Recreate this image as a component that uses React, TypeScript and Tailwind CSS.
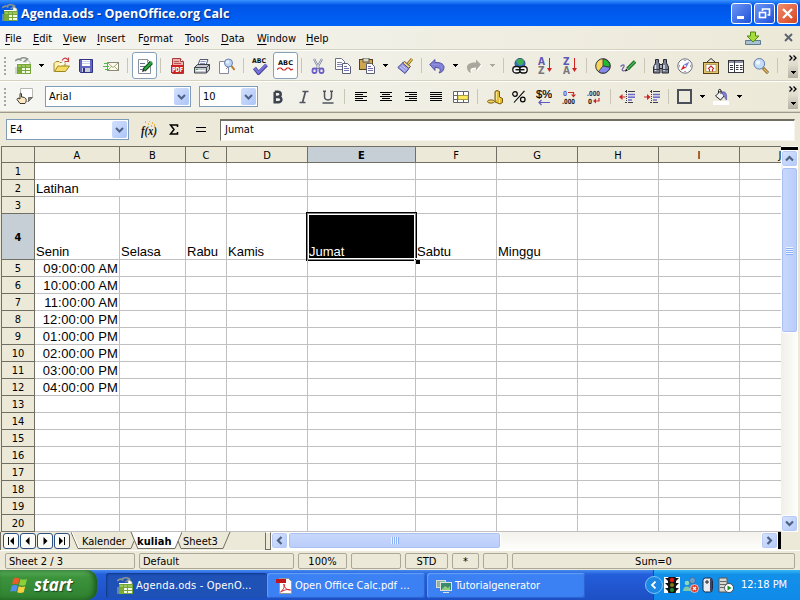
import React from "react";

type Kids = { children?: React.ReactNode; className?: string };

const UI = "font-['DejaVu_Sans_Condensed','DejaVu_Sans',sans-serif] [font-stretch:condensed]";

function Ic({ children, className = "", w = 16, h = 16 }: Kids & { w?: number; h?: number }) {
  return (
    <svg width={w} height={h} viewBox={`0 0 ${w} ${h}`} fill="none" className={`block shrink-0 ${className}`}>
      {children}
    </svg>
  );
}

function IcText({ x, y, size, fill, children, len }: { x: number; y: number; size: number; fill: string; children: string; len?: number }) {
  return (
    <text x={x} y={y} fontSize={size} fill={fill} fontWeight="700" fontFamily="DejaVu Sans" textLength={len} lengthAdjust="spacingAndGlyphs">
      {children}
    </text>
  );
}

const Sep = ({ className = "" }: Kids) => <div className={`h-[15px] w-px shrink-0 bg-[#c9c6b8] ${className}`} />;

const Grip = () => (
  <div className="ml-1 flex shrink-0 flex-col gap-[2px]">
    {[0, 1, 2, 3, 4].map((i) => (
      <div key={i} className="size-[2px] bg-[#aaa79a]" />
    ))}
  </div>
);

const Arrow = ({ className = "", color = "#000" }: Kids & { color?: string }) => (
  <Ic w={5} h={3} className={className}>
    <path d="M0 0h5v1H0zM1 1h3v1H1zM2 2h1v1H2z" fill={color} />
  </Ic>
);

function CalcIcon({ className = "" }: Kids) {
  return (
    <Ic w={17} h={18} className={className}>
      <path d="M11 2l4 3v3h-4z" fill="#f7fbf0" stroke="#93a58e" strokeWidth=".7" />
      <path d="M2 6h9l2-1v3H2z" fill="#fff" />
      <path d="M0 4c2.500-2.500 4.500-2.500 6.500-.5M5 2c3-2 5-1.500 7.500 0l-4 3" stroke="#8a958f" strokeWidth="1.500" />
      <rect x="2.500" y="7.500" width="13" height="9" fill="#f3fae3" stroke="#76a53c" />
      <rect x="3" y="8" width="3" height="9" fill="#7cae33" />
      <rect x="3" y="8" width="12" height="2" fill="#9cc75a" />
      <path d="M3 10.500h12M3 13.500h12M6.500 8v9M10.500 8v9" stroke="#76a53c" />
      <path d="M1 10v7" stroke="#a9b5a2" />
    </Ic>
  );
}

const OpenIcon = ({ className = "" }: Kids) => (
  <Ic w={17} h={17} className={className}>
    <path d="M1 14.500V6.500l2-2h3l1 1h5V9" fill="#fff2a8" stroke="#a08a2c" />
    <path d="M1.500 14.500L5 9h11.500L12.500 14.500z" fill="#f5dd63" stroke="#9d8526" />
    <path d="M5 7.500l6-3 1 2-5 2z" fill="#fff" />
    <path d="M9 3.500c2-3 4-3 6-.5M15.500 .5v4h-4" stroke="#cf4040" strokeWidth="1.200" />
  </Ic>
);

const SaveIcon = ({ className = "" }: Kids) => (
  <Ic className={className}>
    <path d="M1.500 1.500h13v13h-12l-1-1z" fill="#6166c4" stroke="#2e3280" />
    <rect x="4" y="2" width="8" height="6" fill="#fff" />
    <path d="M4 3.500h8M4 5.500h8" stroke="#c8cde8" />
    <rect x="4" y="10" width="8" height="4" fill="#c9cdd8" />
    <rect x="5" y="10" width="2" height="4" fill="#2e3280" />
  </Ic>
);

const MailIcon = ({ className = "" }: Kids) => (
  <Ic className={className}>
    <rect x="4.500" y="4.500" width="11" height="8" fill="#fffde8" stroke="#8b8b78" />
    <path d="M5 5l5 4.500L15 5M5 12l4-4M15 12l-4-4" stroke="#a5a58e" />
    <path d="M1 5.500h4M0 8.500h6M2 11.500h4" stroke="#45c245" strokeWidth="1.200" />
  </Ic>
);

const EditIcon = () => (
  <Ic>
    <path d="M1.500 1.500h9l3 3v11h-12z" fill="#fff" stroke="#8a8f9c" />
    <path d="M10.500 1.500v3h3" stroke="#8a8f9c" />
    <path d="M3 5.500h5M3 8.500h7M3 11.500h4" stroke="#6d7098" />
    <path d="M7 12L14.500 4.500" stroke="#0b4f16" strokeWidth="4" />
    <path d="M7.500 11.500L15 4" stroke="#2ba53c" strokeWidth="2.200" />
    <path d="M5 14l1-3 2 2z" fill="#222" />
  </Ic>
);

const PdfIcon = ({ className = "" }: Kids) => (
  <Ic className={className}>
    <path d="M2.500.5h8l3 3v12h-11z" fill="#e8b0b0" stroke="#a63a3a" />
    <path d="M10.500.5v3h3" fill="#fff" stroke="#a63a3a" />
    <path d="M4 3.500h5M4 5.500h7" stroke="#b55" />
    <rect x="1" y="7" width="13" height="8" fill="#d21e1e" />
    <IcText x={2} y={14} size={7} fill="#fff" len={11}>PDF</IcText>
  </Ic>
);

const PrintIcon = ({ className = "" }: Kids) => (
  <Ic className={className}>
    <path d="M4 7l2-5.500h8L12 7z" fill="#f6f6ff" stroke="#565b70" />
    <path d="M6.500 3.500h5M6 5.500h5" stroke="#8c90b8" />
    <path d="M.5 9.500l3-3h12v5l-3 3.500H.5z" fill="#c5c8cf" stroke="#3e424c" />
    <path d="M.5 9.500h12l3-3M12.500 9.500V15" stroke="#3e424c" />
    <path d="M2 12.500h9" stroke="#fff" />
    <rect x="2" y="11" width="2" height="1" fill="#3ca53c" />
  </Ic>
);

const PreviewIcon = ({ className = "" }: Kids) => (
  <Ic className={className}>
    <path d="M.5 3.500h9v12h-9z" fill="#fff" stroke="#85899a" />
    <path d="M7 11l2.500-2.500" stroke="#85899a" />
    <circle cx="9.500" cy="5" r="4" fill="#bcd7f5" stroke="#6f7fae" />
    <circle cx="8.500" cy="4" r="1.500" fill="#eef7ff" />
    <path d="M12.500 8l3 4" stroke="#b77832" strokeWidth="2" />
  </Ic>
);

const SpellIcon = ({ className = "" }: Kids) => (
  <Ic w={17} h={18} className={className}>
    <IcText x={1} y={6} size={6.5} fill="#111" len={14}>ABC</IcText>
    <path d="M3.500 11l4 5L15.500 8" stroke="#3e3b95" strokeWidth="3.800" />
    <path d="M3.500 11l4 4.500L15.500 7.500" stroke="#7674d8" strokeWidth="2.400" />
  </Ic>
);

const AutoSpellIcon = () => (
  <Ic w={17} h={14}>
    <IcText x={1} y={6} size={6.5} fill="#111" len={15}>ABC</IcText>
    <path d="M0 10.500l2-1.500h2l2 2h2l2-2h2l2 2 2-1" stroke="#d02626" strokeWidth="1.200" />
  </Ic>
);

const CutIcon = ({ className = "" }: Kids) => (
  <Ic className={className}>
    <path d="M4 1l5.500 10M12 1L6.500 11" stroke="#777d95" strokeWidth="2.200" />
    <path d="M4 1l5 9M12 1L7 10" stroke="#e4e8f3" strokeWidth=".9" />
    <rect x="2.500" y="10.500" width="4" height="4.500" rx="1.500" stroke="#6a5fc9" strokeWidth="1.800" />
    <rect x="9.500" y="10.500" width="4" height="4.500" rx="1.500" stroke="#6a5fc9" strokeWidth="1.800" />
  </Ic>
);

const CopyIcon = ({ className = "" }: Kids) => (
  <Ic className={className}>
    <path d="M.5.500h6l3 3v8h-9z" fill="#fff" stroke="#6d7080" />
    <path d="M2 4.500h5M2 6.500h5M2 8.500h5" stroke="#8583b8" />
    <path d="M7.500 5.500h5l3 3v7h-8z" fill="#fff" stroke="#5b5f74" />
    <path d="M9 8.500h3M9 10.500h5M9 12.500h5" stroke="#7370b5" />
  </Ic>
);

const PasteIcon = ({ className = "" }: Kids) => (
  <Ic className={className}>
    <rect x=".5" y="1.500" width="13" height="10" fill="#cda64f" stroke="#54421a" />
    <rect x="4" y="0" width="6" height="4" fill="#d8d6c4" stroke="#444" strokeWidth=".8" />
    <path d="M7.500 5.500h5l3 3v7h-8z" fill="#fff" stroke="#5b5f74" />
    <path d="M9 8.500h3M9 10.500h5M9 12.500h5" stroke="#7370b5" />
  </Ic>
);

const BrushIcon = ({ className = "" }: Kids) => (
  <Ic className={className}>
    <path d="M10 7l5-6" stroke="#8a6b18" strokeWidth="2.800" />
    <path d="M10 7l5-6" stroke="#e9c860" strokeWidth="1.200" />
    <path d="M7.500 3.500l6 5-2 2-6.500-5z" fill="#f4d66d" stroke="#4d4a6f" />
    <path d="M5.500 5l6.500 5.500L8 15.500 .8 9.500z" fill="#9a9ae4" stroke="#4b4d90" />
    <path d="M3 9l5 4M5 7.500l5 4" stroke="#c9c9fa" />
  </Ic>
);

const UndoIcon = ({ className = "" }: Kids) => (
  <Ic className={className}>
    <path d="M.7 6.500L6 1.500v3c6-.5 9.500 2 9 5.500-.4 3-2.500 4.500-5 5 2-2.500 2-5.500-4-5.500v3z" fill="#7f7fd4" stroke="#4c4c9d" strokeWidth=".9" />
    <path d="M2.500 6.500h6c3 .2 4.500 1.500 4.500 4" stroke="#8f8fe0" />
  </Ic>
);

const RedoIcon = ({ className = "" }: Kids) => (
  <Ic className={className}>
    <path d="M16 7.500L11 2.500v3C5 5 1.500 7.500 2 11c.4 3 2 4.500 4.500 5-2-2.500-1.500-5.500 4.500-5.500v3z" fill="#fff" />
    <path d="M15 6.500L10 1.500v3C4 4 .5 6.500 1 10c.4 3 2 4.500 4.500 5-2-2.500-1.500-5.500 4.500-5.500v3z" fill="#aaa79c" />
  </Ic>
);

const LinkIcon = ({ className = "" }: Kids) => (
  <Ic className={className}>
    <circle cx="8" cy="5.500" r="5" fill="#3579b8" stroke="#2c4a78" />
    <path d="M4 3c2-3 6-3 8 0l-2 4H7z" fill="#3fae56" />
    <rect x=".8" y="8.500" width="7.500" height="6.500" rx="3" fill="#fff" stroke="#111" strokeWidth="1.300" />
    <rect x="7.700" y="8.500" width="7.500" height="6.500" rx="3" fill="#fff" stroke="#111" strokeWidth="1.300" />
    <path d="M3.500 11.700h9" stroke="#111" strokeWidth="1.500" />
  </Ic>
);

const SortIcon = ({ a, b, className = "" }: Kids & { a: string; b: string }) => (
  <div className={`flex w-4 shrink-0 items-center justify-between pr-[2px] ${className}`}>
    <div className="flex w-[7px] flex-col text-[10px] leading-[9px] font-bold">
      <span className="text-[#5b58b8]">{a}</span>
      <span className="text-[#77777a]">{b}</span>
    </div>
    <Ic w={5} h={15}>
      <path d="M2.500 0v12" stroke="#cf2222" />
      <path d="M0 10h5l-2.500 4z" fill="#cf2222" />
    </Ic>
  </div>
);

const PieIcon = ({ className = "" }: Kids) => (
  <Ic className={className}>
    <circle cx="8" cy="8" r="7.300" fill="#f6d55a" stroke="#2d3345" />
    <path d="M8 8V1a7 7 0 0 1 6.800 8z" fill="#23bb32" stroke="#2d3345" strokeWidth=".8" />
    <path d="M8 8l6.800 1.500A7 7 0 0 1 3.500 13.500z" fill="#8589e8" stroke="#2d3345" strokeWidth=".8" />
  </Ic>
);

const DrawIcon = ({ className = "" }: Kids) => (
  <Ic className={className}>
    <path d="M7.500 11L15 3.500" stroke="#0d4f17" strokeWidth="3.600" />
    <path d="M7.500 11L15 3.500" stroke="#3cae4c" strokeWidth="1.900" />
    <path d="M.5 8.500c3-3 5-1.500 2.500 1.500-2 2.500-.5 3.500 2.500 2.500" stroke="#6d62a8" strokeWidth="1.200" />
    <path d="M5 13.500l1-3 2 2z" fill="#111" />
  </Ic>
);

const BinocularsIcon = ({ className = "" }: Kids) => (
  <Ic className={className}>
    <path d="M2.500 1.500h3v3l1.500 2v8.500H.5V9L2.500 5zM10.500 1.500h3v3.500l2 4v6H9V6.500l1.500-2z" fill="#7b8291" stroke="#252a35" />
    <path d="M2.500 7v6M11 7v6" stroke="#dfe4ec" strokeWidth="1.500" />
    <rect x="6.500" y="6.500" width="3" height="4" fill="#a6adb9" stroke="#252a35" />
    <path d="M1 11.500h6M9 11.500h6" stroke="#3a3f4b" />
  </Ic>
);

const CompassIcon = ({ className = "" }: Kids) => (
  <Ic className={className}>
    <circle cx="8" cy="8" r="7.200" fill="#fbfbfd" stroke="#6d717d" />
    <path d="M8 2v1M8 13v1M2 8h1M13 8h1" stroke="#555" />
    <path d="M12.500 3.500L9.500 9.300 6.700 6.700z" fill="#7a80dc" />
    <path d="M3.500 12.500L6.700 6.700l2.800 2.600z" fill="#d82323" />
    <circle cx="8" cy="8" r="1" fill="#fff" />
  </Ic>
);

const GalleryIcon = ({ className = "" }: Kids) => (
  <Ic className={className}>
    <path d="M4 4l4-3.500L12 4" stroke="#333" />
    <rect x=".5" y="4.500" width="15" height="11" fill="#e6c568" stroke="#574318" />
    <rect x="3" y="6.500" width="10" height="7" fill="#fff" stroke="#80672c" strokeWidth=".5" />
    <path d="M5 11l3-3 3 3M6.500 11v2.500M9.500 11v2.500" stroke="#c52727" strokeWidth="1.100" />
  </Ic>
);

const SourcesIcon = ({ className = "" }: Kids) => (
  <Ic className={className}>
    <rect x=".5" y="2.500" width="15" height="12" fill="#fff" stroke="#34373f" />
    <rect x="1" y="3" width="14" height="2" fill="#8b8fa2" />
    <path d="M6.500 3v11" stroke="#34373f" />
    <path d="M2 7.500h3M2 9.500h3M2 11.500h3M8 7.500h2.500M8 9.500h2.500M8 11.500h2.500M12 7.500h2.500M12 9.500h2.500M12 11.500h2.500" stroke="#33353c" />
  </Ic>
);

const ZoomIcon = ({ className = "" }: Kids) => (
  <Ic className={className}>
    <path d="M10 10l5 5" stroke="#6a4d1b" strokeWidth="3" />
    <path d="M10.500 10.500l4.300 4.300" stroke="#edb95c" strokeWidth="1.600" />
    <circle cx="6.300" cy="5.800" r="5.300" fill="#c3dcf8" stroke="#6579a8" />
    <circle cx="5" cy="4.500" r="2.200" fill="#eef7ff" />
  </Ic>
);

const MoreTools = ({ className = "" }: Kids) => (
  <div className={`flex h-[27px] w-[10px] shrink-0 flex-col items-center justify-between self-start bg-linear-to-b from-[#efede0] via-[#e0ddcf] to-[#b4b1a4] pt-1 pb-1 ${className}`}>
    <Ic w={8} h={6}>
      <path d="M.5 .5L3 3 .5 5.500M4.500 .5L7 3 4.500 5.500" stroke="#000" strokeWidth="1.300" />
    </Ic>
    <Arrow />
  </div>
);

const DropButton = ({ className = "" }: Kids) => (
  <div className={`flex w-[15px] items-center justify-center self-stretch rounded-[2px] bg-linear-to-br from-[#d3e0fd] to-[#adc5f7] ${className}`}>
    <Ic w={9} h={6}>
      <path d="M1 1l3.500 3.500L8 1" stroke="#4d6185" strokeWidth="2" />
    </Ic>
  </div>
);

const Combo = ({ className = "", children }: Kids) => (
  <div className={`flex h-[21px] shrink-0 items-center justify-between border border-[#7f9db9] bg-white p-px pl-[3px] ${className}`}>
    <span className="pt-px">{children}</span>
    <DropButton />
  </div>
);

const Lines = ({ rows, className = "" }: Kids & { rows: [number, number][] }) => (
  <Ic w={12} h={11} className={className}>
    {rows.map(([x, w], i) => (
      <rect key={i} x={x} y={i * 2 + 1} width={w} height={1} fill="#000" />
    ))}
  </Ic>
);

const Indent = ({ right, className = "" }: Kids & { right?: boolean }) => (
  <Ic className={className}>
    <path d="M6 2.500h2M9 2.500h7M6 13.500h2M9 13.500h5" stroke="#3b3d44" />
    <path d="M9 5.500h7M9 11h4" stroke="#6e6ad0" strokeWidth="1.600" />
    <path d="M9 8.200h7" stroke="#6e6ad0" strokeWidth="1.600" />
    <path d="M7.500 1v14" stroke="#3b3d44" strokeDasharray="1 1" />
    {right ? <path d="M0 7.500h3V5l3.500 3L3 11V8.500H0z" fill="#cc2525" /> : <path d="M6.500 7.500h-3V5L0 8l3.500 3V8.500h3z" fill="#cc2525" />}
  </Ic>
);

function StandardToolbar() {
  return (
    <div className="flex h-[31px] items-center border-t border-[#fffffb] border-b border-b-[#d5d1c0] bg-linear-to-r from-[#f5f5f2] to-[#ece9d8]">
      <Grip />
      <CalcIcon className="ml-[9px]" />
      <Arrow className="ml-[7px]" />
      <OpenIcon className="ml-[9px]" />
      <SaveIcon className="ml-[8px]" />
      <MailIcon className="ml-[9px]" />
      <Sep className="ml-[8px]" />
      <div className="ml-[4px] flex h-[27px] w-[25px] shrink-0 items-center justify-center rounded-[3px] border border-[#85a0b8] bg-white"><EditIcon /></div>
      <Sep className="ml-[3px]" />
      <PdfIcon className="ml-[9px]" />
      <PrintIcon className="ml-[8px]" />
      <PreviewIcon className="ml-[9px]" />
      <Sep className="ml-[8px]" />
      <SpellIcon className="ml-[7px]" />
      <div className="ml-[5px] flex h-[27px] w-[25px] shrink-0 items-center justify-center rounded-[3px] border border-[#85a0b8] bg-white"><AutoSpellIcon /></div>
      <Sep className="ml-[3px]" />
      <CutIcon className="ml-[8px]" />
      <CopyIcon className="ml-[9px]" />
      <PasteIcon className="ml-[8px]" />
      <Arrow className="ml-[8px]" />
      <BrushIcon className="ml-[9px]" />
      <Sep className="ml-[8px]" />
      <UndoIcon className="ml-[7px]" />
      <Arrow className="ml-[8px]" />
      <RedoIcon className="ml-[8px]" />
      <Arrow className="ml-[8px]" color="#aaa79c" />
      <Sep className="ml-[8px]" />
      <LinkIcon className="ml-[8px]" />
      <SortIcon className="ml-[10px]" a="A" b="Z" />
      <SortIcon className="ml-[9px]" a="Z" b="A" />
      <Sep className="ml-[7px]" />
      <PieIcon className="ml-[8px]" />
      <DrawIcon className="ml-[9px]" />
      <Sep className="ml-[8px]" />
      <BinocularsIcon className="ml-[8px]" />
      <CompassIcon className="ml-[8px]" />
      <GalleryIcon className="ml-[10px]" />
      <SourcesIcon className="ml-[9px]" />
      <ZoomIcon className="ml-[9px]" />
      <Sep className="ml-[8px]" />
      <MoreTools className="ml-[10px]" />
    </div>
  );
}

function FormatToolbar() {
  return (
    <div className="flex h-[31px] items-center border-t border-[#fffffb] border-b border-b-[#d5d1c0] bg-linear-to-r from-[#f5f5f2] to-[#ece9d8]">
      <Grip />
      <Ic w={17} h={17} className="ml-[10px]">
        <path d="M4.500.5h12v9l-4 4h-8z" fill="#fff" stroke="#b9b9b3" />
        <path d="M12.500 13.500v-4h4z" fill="#8e8e88" stroke="#6b6b66" />
        <path d="M4 15.500L1 11.500l1-1.500 2 1V6c0-1 1.500-1 1.500 0v3c2 0 4 .7 4.500 2 .5 2 0 3-1 4.500z" fill="#ffe9c0" stroke="#222" strokeWidth=".9" />
      </Ic>
      <Combo className="ml-[12px] w-[146px]">Arial</Combo>
      <Combo className="ml-[8px] w-[59px]">10</Combo>
      <Ic w={10} h={14} className="ml-[15px]"><path d="M1.700 2v10.200h3.500c4.500 0 4-5.300 0-5.300H2M1.700 1.800h3c4 0 4 5 0 5" stroke="#3d434f" strokeWidth="2.500" /></Ic>
      <Ic w={10} h={14} className="ml-[16px]"><path d="M3.500 1.500h6M.5 12.500h6M6.500 1.500l-3 11" stroke="#4f545e" strokeWidth="1.700" /></Ic>
      <Ic w={12} h={14} className="ml-[13px]"><path d="M2.500 1v5.500c0 4.500 7 4.500 7 0V1M1 1.200h3M8 1.200h3M.5 13h11" stroke="#4f545e" strokeWidth="1.500" /></Ic>
      <Sep className="ml-[10px]" />
      <Lines className="ml-[10px]" rows={[[0, 12], [0, 8], [0, 12], [0, 8], [0, 12]]} />
      <Lines className="ml-[13px]" rows={[[0, 12], [2, 8], [0, 12], [2, 8], [0, 12]]} />
      <Lines className="ml-[13px]" rows={[[0, 12], [4, 8], [0, 12], [4, 8], [0, 12]]} />
      <Lines className="ml-[13px]" rows={[[0, 12], [0, 12], [0, 12], [0, 12], [0, 12]]} />
      <Ic className="ml-[11px]">
        <path d="M.5 2.500h15v11H.5z" fill="#fff" stroke="#63666f" />
        <path d="M.5 6.500h15M.5 10.500h15M4.500 2.500v11M10.500 2.500v4M10.500 10v4" stroke="#63666f" />
        <rect x="5" y="6.500" width="10" height="4" fill="#ffea5c" stroke="#a38f2a" strokeWidth=".6" />
      </Ic>
      <Sep className="ml-[8px]" />
      <Ic className="ml-[9px]">
        <path d="M8 2.500l2-1 2.500 1v5.500l3 1.500v4l-2.500 1.500-5-2z" fill="#e6bd36" stroke="#79590d" />
        <path d="M9.500 3v8M12.500 9v5" stroke="#fae88f" />
        <ellipse cx="4" cy="12.500" rx="3.500" ry="1.600" fill="#f3d560" stroke="#79590d" />
      </Ic>
      <Ic w={14} h={14} className="ml-[9px]">
        <circle cx="3" cy="4" r="2.300" stroke="#000" strokeWidth="1.200" />
        <circle cx="10.800" cy="9.500" r="2.300" stroke="#000" strokeWidth="1.200" />
        <path d="M12.500.8L2 12.500" stroke="#000" strokeWidth="1.100" />
      </Ic>
      <Ic h={18} className="ml-[10px]">
        <text x="0" y="10" fontSize="11" fontFamily="Liberation Sans" fill="#000" stroke="#000" strokeWidth=".2" textLength="16" lengthAdjust="spacingAndGlyphs">$%</text>
        <path d="M3 14.500h11M5.500 12L3 14.500 5.500 17" stroke="#5d5ac2" strokeWidth="1.200" />
      </Ic>
      <Ic h={20} className="ml-[9px]">
        <IcText x={2} y={9} size={7} fill="#5a58cc" len={4}>0</IcText>
        <path d="M7 5.500h5.500v2" stroke="#cc2525" strokeWidth="1.200" /><path d="M10 7.500h5L12.500 10.500z" fill="#cc2525" />
        <IcText x={1} y={17} size={7} fill="#222" len={13}>.000</IcText>
      </Ic>
      <Ic h={20} className="ml-[9px]">
        <IcText x={1} y={9} size={7} fill="#33335e" len={13}>.000</IcText>
        <IcText x={2} y={17} size={7} fill="#222" len={4}>0</IcText>
        <path d="M13 11v3H9" stroke="#cc2525" strokeWidth="1.200" /><path d="M10 11.500v5L7 14z" fill="#cc2525" />
      </Ic>
      <Sep className="ml-[8px]" />
      <Indent className="ml-[8px]" />
      <Indent right className="ml-[9px]" />
      <Sep className="ml-[8px]" />
      <div className="ml-[8px] size-[15px] shrink-0 border-2 border-[#4b4f59]" />
      <Arrow className="ml-[8px]" />
      <Ic h={18} className="ml-[8px]">
        <path d="M2.500 8l5-5 4.500 4-4.500 5z" fill="#f2f2f2" stroke="#222" />
        <path d="M5.500 5V2.500c0-1.500 2.500-1.500 2.500 0V6" stroke="#222" />
        <path d="M9 4c4-1 5 2 4.500 8-1.500-1-1.500-4-3.500-5z" fill="#7f7ed6" stroke="#45459a" strokeWidth=".6" />
        <rect x="0" y="13" width="16" height="4" fill="#fff" />
      </Ic>
      <Arrow className="ml-[8px]" />
      <MoreTools className="ml-[46px]" />
    </div>
  );
}

const COLS = [
  { n: "A", w: "w-[85px]" }, { n: "B", w: "w-[66px]" }, { n: "C", w: "w-[41px]" },
  { n: "D", w: "w-[81px]" }, { n: "E", w: "w-[108px]" }, { n: "F", w: "w-[81px]" },
  { n: "G", w: "w-[81px]" }, { n: "H", w: "w-[81px]" }, { n: "I", w: "w-[81px]" }, { n: "J", w: "w-[81px]" },
];

const DATA: Record<string, string> = {
  A2: "Latihan", A4: "Senin", B4: "Selasa", C4: "Rabu", D4: "Kamis", E4: "Jumat", F4: "Sabtu", G4: "Minggu",
  A5: "09:00:00 AM", A6: "10:00:00 AM", A7: "11:00:00 AM", A8: "12:00:00 PM",
  A9: "01:00:00 PM", A10: "02:00:00 PM", A11: "03:00:00 PM", A12: "04:00:00 PM",
};

function Cell({ col, row, w }: { col: string; row: number; w: string }) {
  const v = DATA[col + row];
  const time = col === "A" && row > 4;
  const spill = col === "A" && row === 2;
  const active = col === "E" && row === 4;
  return (
    <div className={`relative flex shrink-0 items-end border-b border-[#c0c0c0] ${w} ${spill ? "" : "border-r"} ${time ? "justify-end pr-[1px]" : "pl-[1px]"}`}>
      {active && (
        <div className="absolute -top-[2px] -left-[2px] h-[49px] w-[111px] border border-black bg-[#808080] p-px">
          <div className="size-full border border-white bg-black" />
          <div className="absolute -right-[4px] -bottom-[4px] size-[6px] border-t border-l border-white bg-black" />
        </div>
      )}
      {v && <span className={`relative leading-[14px] whitespace-nowrap ${active ? "text-white" : ""} ${time ? "tracking-[0.15px]" : ""}`}>{v}</span>}
    </div>
  );
}

function Sheet() {
  return (
    <div className="flex h-[386px] w-[780px] flex-col overflow-hidden border-t border-l border-[#716f64] bg-white">
      <div className="flex h-[16px] shrink-0">
        <div className="w-[33px] shrink-0 border-r border-b border-[#716f64] bg-[#ece9d8]" />
        {COLS.map((c) => (
          <div key={c.n} className={`flex shrink-0 items-center justify-center border-r border-b border-[#716f64] pt-[3px] ${c.w} ${c.n === "E" ? "bg-[#c6ced6] font-bold" : "bg-[#ece9d8]"}`}>
            {c.n}
          </div>
        ))}
      </div>
      {Array.from({ length: 20 }, (_, i) => i + 1).map((r) => (
        <div key={r} className={`flex shrink-0 ${r === 4 ? "h-[46px]" : "h-[17px]"}`}>
          <div className={`flex w-[33px] shrink-0 items-center justify-center border-r border-b border-[#716f64] pt-[2px] ${r === 4 ? "bg-[#c6ced6] font-bold" : "bg-[#ece9d8]"}`}>{r}</div>
          <div className="flex font-['Liberation_Sans',Arial,sans-serif] text-[13px]">
            {COLS.map((c) => <Cell key={c.n} col={c.n} row={r} w={c.w} />)}
          </div>
        </div>
      ))}
    </div>
  );
}

const SBtn = ({ d, className = "" }: Kids & { d: string }) => (
  <div className={`flex size-[17px] shrink-0 items-center justify-center rounded-[3px] border border-white bg-linear-to-br from-[#d8e4fe] to-[#b3c9f8] shadow-[inset_0_0_0_1px_#b7caf5] ${className}`}>
    <Ic w={9} h={9}><path d={d} stroke="#4d6185" strokeWidth="2.200" /></Ic>
  </div>
);

function VScroll() {
  return (
    <div className="flex w-[17px] flex-col bg-linear-to-r from-[#f0efe8] to-[#fefefb] pt-px">
      <div className="h-[3px] shrink-0 bg-black" />
      <SBtn d="M1 6.500L4.500 3 8 6.500" />
      <div className="flex h-[166px] flex-col items-center justify-center gap-px rounded-[3px] border border-white bg-linear-to-r from-[#c9d8fc] to-[#b9cdfa] shadow-[inset_0_0_0_1px_#a9c0f0]">
        {[0, 1, 2, 3].map((i) => <div key={i} className="h-px w-[7px] bg-[#eef4fe] shadow-[0_1px_0_#8cb0f8]" />)}
      </div>
      <SBtn d="M1 2.500L4.500 6 8 2.500" className="mt-auto" />
    </div>
  );
}

const NavBtn = ({ d }: { d: string }) => (
  <div className="mr-px flex size-[16px] shrink-0 items-center justify-center rounded-[3px] border border-[#2b4f80] bg-[#fbfbf8]">
    <Ic w={8} h={8}><path d={d} fill="#000" /></Ic>
  </div>
);

function SheetTabs() {
  return (
    <div className="flex h-[18px] bg-[#ece9d8]">
      <div className="flex w-[71px] shrink-0 items-center border-l border-[#716f64] pl-[2px]">
        <NavBtn d="M1 0h1v8H1zM7 0v8L3 4z" />
        <NavBtn d="M5.500 0v8L1.500 4z" />
        <NavBtn d="M2.500 0v8l4-4z" />
        <NavBtn d="M6 0h1v8H6zM1 0v8l4-4z" />
      </div>
      <Ic w={8} h={18}>
        <path d="M0 0l7 16.500h1" stroke="#716f64" /><path d="M1 0l7 16" stroke="#fff" />
      </Ic>
      <div className="h-[17px] w-[51px] shrink-0 border-b border-[#716f64] pl-[3px] leading-[19px]">Kalender</div>
      <Ic w={8} h={18}>
        <path d="M2 0L8 17V0z" fill="#fff" />
        <path d="M0 16.500h1L4 9M1 0l7 17" stroke="#716f64" />
      </Ic>
      <div className="h-[17px] w-[36px] shrink-0 border-b border-[#716f64] bg-white leading-[19px] font-bold whitespace-nowrap"><span className="-ml-px tracking-[0.1px]">kuliah</span></div>
      <Ic w={8} h={18}>
        <path d="M0 0h8L1 17H0z" fill="#fff" />
        <path d="M0 16.500h1L8 0M4 9l3 7.500h1" stroke="#716f64" />
      </Ic>
      <div className="h-[17px] w-[40px] shrink-0 border-b border-[#716f64] pl-[1px] leading-[19px]">Sheet3</div>
      <Ic w={9} h={18}><path d="M0 16.500h1L8 0" stroke="#716f64" /></Ic>
      <div className="ml-[34px] w-[6px] shrink-0 border border-[#716f64] border-t-white bg-[#ece9d8]" />
      <div className="flex w-[507px] bg-linear-to-b from-[#f3f2ec] to-[#fefefb]">
        <SBtn d="M6.500 1L3 4.500 6.500 8" />
        <div className="flex h-[17px] w-[213px] items-center justify-center gap-px rounded-[3px] border border-white bg-linear-to-b from-[#c9d8fc] to-[#b9cdfa] shadow-[inset_0_0_0_1px_#a9c0f0]">
          {[0, 1, 2, 3].map((i) => <div key={i} className="h-[7px] w-px bg-[#eef4fe] shadow-[1px_0_0_#8cb0f8]" />)}
        </div>
        <SBtn d="M2.500 1L6 4.500 2.500 8" className="ml-auto" />
      </div>
      <div className="h-[17px] w-[3px] bg-black" />
    </div>
  );
}

const Stat = ({ children, className = "" }: Kids) => (
  <div className={`mr-1 flex h-[16px] shrink-0 items-center rounded-[2px] border border-[#aca899] ${className}`}><span className="pt-[3px]">{children}</span></div>
);

const Menu = ({ pre = "", k, rest, className }: { pre?: string; k: string; rest: string; className: string }) => (
  <div className={`shrink-0 pt-[2px] ${className}`}>{pre}<span className="underline underline-offset-2">{k}</span>{rest}</div>
);

const WinBtn = ({ children, className = "" }: Kids) => (
  <div className={`flex size-[21px] shrink-0 items-center justify-center rounded-[3px] border border-white ${className}`}>{children}</div>
);

function Taskbar() {
  return (
    <div className="flex h-[30px] items-stretch bg-linear-to-b from-[#4489f0] via-[#245edb] via-15% to-[#1d4fc4] text-white">
      <div className="flex w-[97px] shrink-0 items-center rounded-r-[10px] bg-linear-to-b from-[#5fb15f] via-[#3c933c] via-25% to-[#2f8130] pl-[10px] shadow-[inset_-3px_0_5px_#1c5a1e]">
        <Ic w={19} h={18}>
          <path d="M3.500 2.500c2-1.200 4-1 6 0L8 8.500c-2-1-4-1.200-6 0z" fill="#ee5a28" />
          <path d="M10.500 3c2 1 4 1 6.500 0l-1.500 6c-2 1-4.500 1-6.500 0z" fill="#8bcf3b" />
          <path d="M1.700 9.700c2-1 4-1 6 0l-1.500 6c-2-1-4-1-6 0z" fill="#4f8ff0" />
          <path d="M8.700 10.200c2 1 4.500 1 6.500 0l-1.500 6c-2.500 1-4.500 1-6.500 0z" fill="#fbd03c" />
        </Ic>
        <span className="ml-[5px] font-['Open_Sans',sans-serif] text-[17px] font-bold italic tracking-[-0.1px] [font-stretch:normal] [text-shadow:1px_1px_1px_#1b4a1b]">start</span>
      </div>
      <div className="mt-[3px] ml-[9px] flex h-[25px] w-[161px] shrink-0 items-center rounded-[3px] bg-[#1e52b7] pl-[11px] shadow-[inset_1px_1px_2px_#11358a]">
        <CalcIcon />
        <span className="ml-[2px] pt-px tracking-[0.2px]">Agenda.ods - OpenO...</span>
      </div>
      <div className="mt-[3px] flex h-[25px] w-[158px] shrink-0 items-center rounded-[3px] bg-[#3c81f3] pl-[9px] shadow-[inset_1px_1px_1px_#66a0fb,inset_-1px_-1px_1px_#2a62cf]">
        <Ic>
          <path d="M3.500.5h9l3 3v12h-12z" fill="#fff" stroke="#999" />
          <rect x="0" y="1" width="10" height="4" fill="#c3141b" />
          <path d="M4.500 14c3-2 5-7 3.500-8-1.500 1 2 6.500 6.500 6-3-1.500-7 .5-10 2z" stroke="#d8222a" />
        </Ic>
        <span className="ml-[3px]">Open Office Calc.pdf ...</span>
      </div>
      <div className="mt-[3px] ml-[2px] flex h-[25px] w-[158px] shrink-0 items-center rounded-[3px] bg-[#3c81f3] pl-[9px] shadow-[inset_1px_1px_1px_#66a0fb,inset_-1px_-1px_1px_#2a62cf]">
        <Ic>
          <rect x=".5" y="2.500" width="9" height="7" fill="#8fb7a0" stroke="#d3dbd0" />
          <rect x="4.500" y="4.500" width="11" height="8" fill="#3b8a6d" stroke="#dde2dc" />
          <path d="M6 11l3-3 3 2 2-2v4H6z" fill="#8fcc7e" />
          <path d="M7 14.500h6" stroke="#dde2dc" />
        </Ic>
        <span className="ml-[3px]">Tutorialgenerator</span>
      </div>
      <div className="ml-auto flex w-[155px] items-center">
        <div className="z-10 flex size-[18px] shrink-0 items-center justify-center rounded-full border border-[#7cc4fa] bg-[#1d87e4]">
          <Ic w={8} h={8}><path d="M5.500.5L2 4l3.500 3.500" stroke="#fff" strokeWidth="1.800" /></Ic>
        </div>
        <div className="-ml-[10px] flex h-full flex-1 items-center border-l border-[#0b4fae] bg-linear-to-b from-[#33b7f5] via-[#1290e8] via-15% to-[#0f8aea] pl-[10px]">
          <Ic>
            <rect width="16" height="16" fill="#fff" />
            <path d="M1 1h4l-1 3zM15 1h-4l1 3zM1 6h4l-1 3zM15 6h-4l1 3zM1 11h4l-1 3zM15 11h-4l1 3z" fill="#111" />
            <rect x="4" y="0" width="8" height="16" rx="1" fill="#151515" />
            <circle cx="8" cy="3" r="2.200" fill="#e8161b" /><circle cx="8" cy="8" r="2" fill="#8a7a18" /><circle cx="8" cy="13" r="2" fill="#19902c" />
          </Ic>
          <Ic className="ml-[3px]">
            <circle cx="9.500" cy="3.500" r="3" fill="#6c9fce" stroke="#335c8e" strokeWidth=".6" />
            <path d="M5 12c0-6 9-6 9 0z" fill="#4f8fc2" />
            <circle cx="4" cy="6" r="2.300" fill="#8fd8b8" /><path d="M0 14c0-6 7-6 8 0z" fill="#7fc9a9" />
            <circle cx="11.500" cy="11.500" r="4" fill="#dc3b29" stroke="#fff" strokeWidth=".6" />
            <path d="M10 10l3 3M13 10l-3 3" stroke="#fff" strokeWidth="1.200" />
          </Ic>
          <Ic w={12} className="ml-[3px]">
            <rect x="1" y="1" width="9.500" height="14" rx="2.500" fill="#e9ebf2" stroke="#23283d" />
            <rect x="8" y="2" width="2" height="12" fill="#3c4260" />
            <path d="M5 3v4M3 5h4" stroke="#222" />
          </Ic>
          <Ic className="ml-[4px]">
            <path d="M1 1h8v14H1z" fill="#d8d8d2" stroke="#555" /><path d="M2 4.500h6M2 7.500h6M2 10.500h4" stroke="#666" />
            <circle cx="11" cy="11" r="4.500" fill="#fff" stroke="#333" strokeWidth=".8" /><path d="M9.500 8.500v5l4-2.500z" fill="#188a28" />
          </Ic>
          <span className="ml-[7px] whitespace-nowrap">12:18 PM</span>
        </div>
      </div>
    </div>
  );
}

export default function App() {
  return (
    <div className={`flex h-[600px] w-[800px] flex-col overflow-hidden bg-[#ece9d8] text-[11px] leading-[14px] text-black ${UI}`}>
      <div className="flex h-[26px] shrink-0 items-center bg-linear-to-b from-[#3a93ff] via-[#0055e6] via-20% to-[#0062f8] pr-[2px] pl-[2px]">
        <CalcIcon />
        <span className="ml-[2px] pt-[2px] font-['Open_Sans','Noto_Sans',sans-serif] text-[12.5px] font-bold tracking-[0.06px] whitespace-nowrap text-white [font-stretch:normal] [text-shadow:1px_1px_1px_#0a2f8a]">Agenda.ods - OpenOffice.org Calc</span>
        <div className="ml-auto flex gap-[2px]">
          <WinBtn className="bg-linear-to-br from-[#6d95f5] to-[#1f4fd8]"><Ic w={15} h={15}><rect x="3" y="10" width="7" height="3" fill="#fff" /></Ic></WinBtn>
          <WinBtn className="bg-linear-to-br from-[#6d95f5] to-[#1f4fd8]"><Ic w={15} h={15}><path d="M5.500 5V3h7v6h-2" stroke="#fff" strokeWidth="1.600" /><rect x="2.500" y="6.500" width="6" height="5" stroke="#fff" strokeWidth="1.600" /></Ic></WinBtn>
          <WinBtn className="bg-linear-to-br from-[#f08b6a] to-[#d5421d]"><Ic w={15} h={15}><path d="M3 3l9 9M12 3l-9 9" stroke="#fff" strokeWidth="2.300" /></Ic></WinBtn>
        </div>
      </div>

      <div className="flex h-[24px] shrink-0 items-center border-b border-[#d5d1c0] bg-linear-to-r from-[#f5f5f2] to-[#ece9d8] pl-[5px]">
        <Menu k="F" rest="ile" className="w-[28px]" />
        <Menu k="E" rest="dit" className="w-[30px]" />
        <Menu k="V" rest="iew" className="w-[34px]" />
        <Menu k="I" rest="nsert" className="w-[41px]" />
        <Menu pre="F" k="o" rest="rmat" className="w-[47px]" />
        <Menu k="T" rest="ools" className="w-[36px]" />
        <Menu k="D" rest="ata" className="w-[36px]" />
        <Menu k="W" rest="indow" className="w-[49px]" />
        <Menu k="H" rest="elp" className="w-[30px]" />
        <Ic w={16} h={14} className="ml-auto">
          <path d="M.5 9.500h15v4H.5z" fill="#a9c0cf" stroke="#5b7c91" />
          <path d="M5.500 1h5v4h3.500L8 11 2 5h3.500z" fill="#a8dc3a" stroke="#4c8a13" />
        </Ic>
        <Ic w={9} h={9} className="mr-[7px] ml-[23px]"><path d="M1 1l7 7M8 1L1 8" stroke="#5b6470" strokeWidth="1.900" /></Ic>
      </div>

      <StandardToolbar />
      <FormatToolbar />

      <div className="flex h-[34px] shrink-0 items-center border-t border-[#9d9a8c] pl-[6px]">
        <Combo className="w-[123px]">E4</Combo>
        <Ic w={17} h={18} className="ml-[12px]">
          <text x="0" y="14" fontSize="12" fontStyle="italic" fontFamily="Liberation Serif" fontWeight="700" fill="#111" textLength="16" lengthAdjust="spacingAndGlyphs">f(x)</text>
          <path d="M4 1h1M8 0h1M7 3h1M11 2h1M13 4h1M10 5h1" stroke="#e5a91c" strokeWidth="1.500" />
        </Ic>
        <Ic w={10} h={11} className="ml-[11px]"><path d="M8.500 3V1H1.500L5 5.500 1.500 10h7V8" stroke="#000" strokeWidth="1.500" /></Ic>
        <Ic w={10} h={5} className="ml-[17px]"><path d="M0 .5h10M0 4.500h10" stroke="#000" /></Ic>
        <div className="mr-[5px] ml-[14px] flex h-[22px] flex-1 items-center border border-t-2 border-[#f7f6ee] border-t-[#716f64] border-l-[#716f64] bg-white pl-[4px]">Jumat</div>
      </div>

      <div className="flex h-[386px] shrink-0 bg-[#ece9d8] pl-px">
        <Sheet />
        <VScroll />
      </div>

      <SheetTabs />

      <div className="flex h-[20px] shrink-0 items-center border-t border-white pl-[5px]">
        <Stat className="w-[130px] pl-[3px]">Sheet 2 / 3</Stat>
        <Stat className="w-[155px] pl-[3px]">Default</Stat>
        <Stat className="w-[49px] justify-center">100%</Stat>
        <Stat className="w-[50px]" />
        <Stat className="w-[43px] justify-center">STD</Stat>
        <Stat className="w-[27px] justify-center">*</Stat>
        <Stat className="w-[25px]" />
        <Stat className="w-[283px] justify-center">Sum=0</Stat>
      </div>

      <Taskbar />
    </div>
  );
}
